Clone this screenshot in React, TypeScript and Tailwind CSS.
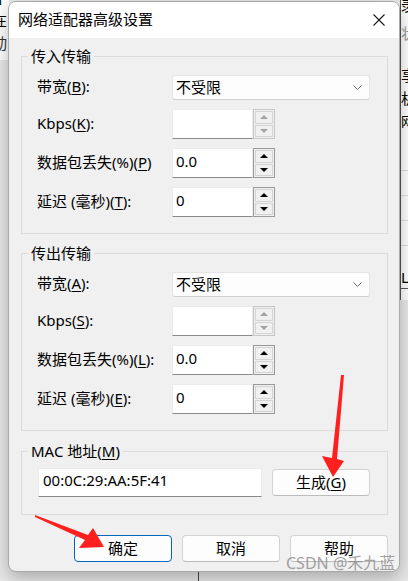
import React from "react";

const font = "font-['Noto_Sans','Noto_Sans_CJK_SC',sans-serif]";

function Acc({ pre, k, post }: { pre: string; k: string; post?: string }) {
  return (
    <span className="whitespace-pre">
      {pre}
      <u className="underline-offset-2">{k}</u>
      {post}
    </span>
  );
}

function Arrow({ up, disabled }: { up?: boolean; disabled?: boolean }) {
  const color = disabled ? "border-b-[#a3a3a3]" : "border-b-black";
  const colorDown = disabled ? "border-t-[#a3a3a3]" : "border-t-black";
  return (
    <div className="flex-1 flex items-center justify-center bg-[#f0f0f0] border border-[#d4d4d4]">
      {up ? (
        <div className={`w-0 h-0 border-x-[4px] border-x-transparent border-b-[4px] ${color}`} />
      ) : (
        <div className={`w-0 h-0 border-x-[4px] border-x-transparent border-t-[4px] ${colorDown}`} />
      )}
    </div>
  );
}

function Spin({ value, disabled }: { value?: string; disabled?: boolean }) {
  return (
    <div className="flex h-[30px]">
      <div className="w-[81px] bg-white border border-[#ebebeb] border-b-[#8a8a8a] flex items-center pl-[3px] pb-[3px] text-[15px] text-black">
        {value}
      </div>
      <div
        className={`w-[22px] border p-[1px] flex flex-col gap-[1px] bg-[#f0f0f0] ${
          disabled ? "border-[#c6c6c6]" : "border-[#9a9a9a]"
        }`}
      >
        <Arrow up disabled={disabled} />
        <Arrow disabled={disabled} />
      </div>
    </div>
  );
}

function Select() {
  return (
    <div className="w-[198px] h-[25px] flex items-center justify-between pl-[3px] pr-[7px] bg-[#fdfdfd] border border-[#e5e5e5] border-b-[#cfcfcf] rounded-[3px] text-[15px]">
      <span>不受限</span>
      <svg width="9" height="6" viewBox="0 0 9 6" fill="none">
        <polyline points="0.5,0.5 4.5,4.5 8.5,0.5" stroke="#6a6a6a" strokeWidth="1" />
      </svg>
    </div>
  );
}

function Row({ label, children, className = "" }: { label: React.ReactNode; children: React.ReactNode; className?: string }) {
  return (
    <div className={`flex items-center ${className}`}>
      <div className="w-[135px] text-[15px] pb-[2px]">{label}</div>
      {children}
    </div>
  );
}

function Group({ title, keys }: { title: string; keys: [string, string, string, string] }) {
  return (
    <fieldset className="border border-[#dcdcdc] pl-[15px] pt-[10px] pb-[16px]">
      <legend className="ml-[-9px] px-[3px] text-[15px] leading-[18px]">{title}</legend>
      <Row label={<Acc pre="带宽(" k={keys[0]} post="):" />} className="mb-[9px]">
        <Select />
      </Row>
      <div className="flex flex-col gap-[9px]">
        <Row label={<Acc pre="Kbps(" k={keys[1]} post="):" />}>
          <Spin disabled />
        </Row>
        <Row label={<Acc pre="数据包丢失(%)(" k={keys[2]} post={keys[2] === "P" ? ")" : "):"} />}>
          <Spin value="0.0" />
        </Row>
        <Row label={<Acc pre="延迟 (毫秒)(" k={keys[3]} post="):" />}>
          <Spin value="0" />
        </Row>
      </div>
    </fieldset>
  );
}

function Btn({ children, focused }: { children: React.ReactNode; focused?: boolean }) {
  return (
    <button
      className={`w-[98px] h-[27px] rounded-[4px] bg-[#fdfdfd] text-[15px] flex items-center justify-center pb-[1px] border ${
        focused ? "border-[#0067c0]" : "border-[#d3d3d3] border-b-[#bcbcbc]"
      }`}
    >
      {children}
    </button>
  );
}

export default function App() {
  return (
    <div className={`relative w-[408px] h-[581px] overflow-hidden bg-[#e9e9e9] text-black ${font}`}>
      {/* window behind */}
      <div className="absolute left-0 top-0 w-[9px] h-[60px] bg-white" />
      <span className="absolute left-[-9px] top-[-12px] text-[15px]">N</span>
      <span className="absolute left-[-8px] top-[9px] text-[15px]">在</span>
      <span className="absolute left-[-8px] top-[32px] text-[15px] text-[#333]">动</span>
      <div className="absolute left-[400px] top-0 w-[8px] h-[300px] bg-white border-l border-[#555]" />
      <span className="absolute left-[401px] top-[-6px] text-[15px]">羡</span>
      <span className="absolute left-[401px] top-[22px] text-[15px] text-[#999]">状</span>
      <span className="absolute left-[401px] top-[64px] text-[15px]">享</span>
      <span className="absolute left-[401px] top-[87px] text-[15px]">机</span>
      <span className="absolute left-[401px] top-[112px] text-[13px]">网</span>
      <div className="absolute left-[401px] top-[170px] w-[7px] h-px bg-[#e0e0e0]" />
      <div className="absolute left-[401px] top-[195px] w-[7px] h-px bg-[#e0e0e0]" />
      <div className="absolute left-[401px] top-[220px] w-[7px] h-px bg-[#e0e0e0]" />
      <div className="absolute left-[401px] top-[245px] w-[7px] h-px bg-[#e0e0e0]" />
      <span className="absolute left-[401px] top-[266px] text-[15px]">LA</span>
      <div className="absolute left-[401px] top-[288px] w-[7px] h-px bg-[#555]" />
      <div className="absolute left-[198px] top-[572px] w-px h-[9px] bg-[#444]" />

      {/* dialog */}
      <div className="relative ml-[8px] mt-[1px] w-[392px] h-[571px] rounded-[8px] overflow-hidden border border-[#a9a9a9] bg-[#f0f0f0] shadow-[0_6px_18px_rgba(0,0,0,0.28)] flex flex-col">
        <div className="h-[36px] bg-white flex items-center justify-between pl-[9px] pr-[14px] shrink-0">
          <span className="text-[15px] pb-[1px]">网络适配器高级设置</span>
          <svg width="12" height="12" viewBox="0 0 12 12">
            <path d="M0.5 0.5 L11.5 11.5 M11.5 0.5 L0.5 11.5" stroke="#1b1b1b" strokeWidth="1.1" />
          </svg>
        </div>

        <div className="flex flex-col pl-[12px] pr-[11px] pt-[9px]">
          <Group title="传入传输" keys={["B", "K", "P", "T"]} />
          <div className="mt-[10px]">
            <Group title="传出传输" keys={["A", "S", "L", "E"]} />
          </div>
          <fieldset className="mt-[11px] border border-[#dcdcdc] pl-[16px] pt-[8px] pb-[17px]">
            <legend className="ml-[-10px] px-[3px] text-[15px] leading-[18px]">
              <Acc pre="MAC 地址(" k="M" post=")" />
            </legend>
            <div className="flex items-center gap-[10px]">
              <div className="w-[224px] h-[29px] bg-white border border-[#ebebeb] border-b-[#8a8a8a] flex items-center pl-[4px] pb-[4px] text-[15px]">
                00:0C:29:AA:5F:41
              </div>
              <Btn>
                <Acc pre="生成(" k="G" post=")" />
              </Btn>
            </div>
          </fieldset>
          <div className="flex justify-end gap-[10px] mt-[20px]">
            <Btn focused>确定</Btn>
            <Btn>取消</Btn>
            <Btn>帮助</Btn>
          </div>
        </div>
      </div>

      {/* annotations */}
      <svg className="absolute inset-0 pointer-events-none" width="408" height="581" viewBox="0 0 408 581">
        <polygon points="341,375 344,375 337,459 344,461 333,477 322,456 332,458" fill="#ff1f1f" />
        <polygon points="35,515 88,535 93,528 104,547 79,548 85,540 35,517" fill="#ff1f1f" />
      </svg>
      <span className="absolute left-[286px] top-[551px] text-[16px] text-[#8a8a8a]/80 pointer-events-none">
        CSDN @禾九蓝
      </span>
    </div>
  );
}
